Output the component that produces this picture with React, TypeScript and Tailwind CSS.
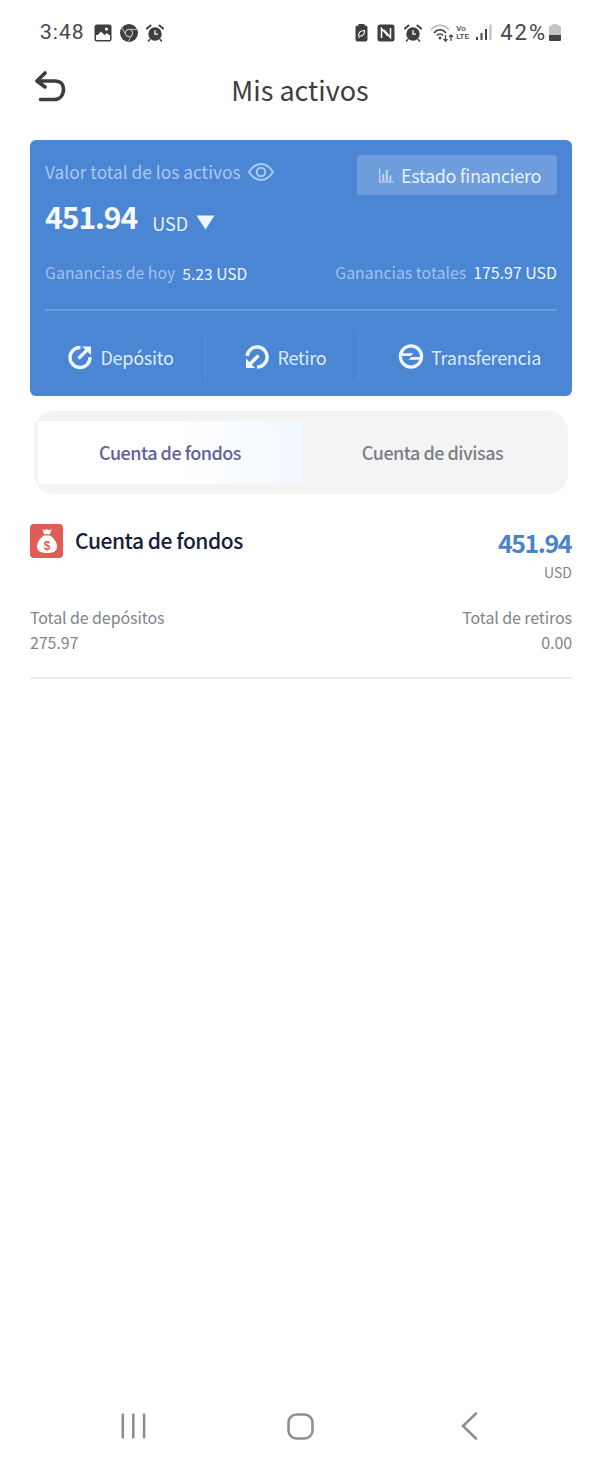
const APP_FONT = "font-['Noto_Sans_CJK_SC','Noto_Sans',sans-serif]";

function PictureIcon() {
  return (
    <svg width="18" height="18" viewBox="0 0 18 18">
      <rect x="0.5" y="0.5" width="17" height="17" rx="2.5" fill="#3f3f3f" />
      <rect x="2" y="11" width="14" height="5" fill="#fff" />
      <path d="M2 13 L7 7.5 L10.5 11 L13 9 L16 12 V14 H2 Z" fill="#fff" />
      <circle cx="12.5" cy="5" r="1.6" fill="#fff" />
    </svg>
  );
}

function ChromeIcon() {
  return (
    <svg width="18" height="18" viewBox="0 0 18 18">
      <circle cx="9" cy="9" r="9" fill="#3f3f3f" />
      <circle cx="9" cy="9" r="3.6" fill="#3f3f3f" stroke="#bbb" strokeWidth="1.2" />
      <path d="M9 5.4 H17 M5.9 10.8 L2 4 M12.1 10.8 L8 17.5" stroke="#bbb" strokeWidth="1" />
    </svg>
  );
}

function AlarmIcon() {
  return (
    <svg width="18" height="18" viewBox="0 0 18 18">
      <circle cx="9" cy="10" r="6.7" fill="#3f3f3f" />
      <path d="M1 4.5 L4.5 1.5 M17 4.5 L13.5 1.5" stroke="#3f3f3f" strokeWidth="2" strokeLinecap="round" />
      <path d="M3.8 15.5 L2.5 17 M14.2 15.5 L15.5 17" stroke="#3f3f3f" strokeWidth="1.6" strokeLinecap="round" />
      <path d="M9 6.2 V10.2 H12" fill="none" stroke="#fff" strokeWidth="1.3" />
    </svg>
  );
}

function BatterySaverIcon() {
  return (
    <svg width="13" height="18" viewBox="0 0 13 18">
      <rect x="3.5" y="0" width="6" height="2" fill="#3f3f3f" />
      <rect x="0.5" y="1.5" width="12" height="16" rx="2" fill="#3f3f3f" />
      <path d="M3.5 12 C3.5 8 6.5 6.5 9.5 6.5 C9.5 10 8 12.5 5 12 L3.5 14" fill="none" stroke="#fff" strokeWidth="1.1" />
    </svg>
  );
}

function NfcIcon() {
  return (
    <svg width="18" height="18" viewBox="0 0 18 18">
      <rect x="0.5" y="0.5" width="17" height="17" rx="2.5" fill="#3f3f3f" />
      <path d="M4.5 14 V4.5 L11 12 M13.5 4 V13.5 L7 6" fill="none" stroke="#fff" strokeWidth="1.5" />
    </svg>
  );
}

function WifiIcon() {
  return (
    <svg width="24" height="18" viewBox="0 0 24 18">
      <path d="M1 6 C6 -0.5 14 -0.5 19 6" fill="none" stroke="#b5b5b5" strokeWidth="1.5" />
      <path d="M4 9 C7.5 4.8 12.5 4.8 16 9" fill="none" stroke="#444" strokeWidth="1.5" />
      <path d="M6.8 11.5 C8.8 9.4 11.2 9.4 13.2 11.5" fill="none" stroke="#444" strokeWidth="1.5" />
      <circle cx="10" cy="14" r="1.4" fill="#444" />
      <path d="M15.5 11 V17 M13.6 15 L15.5 17.2 L17.4 15" fill="none" stroke="#444" strokeWidth="1.2" />
      <path d="M21 17 V11 M19.1 13 L21 10.8 L22.9 13" fill="none" stroke="#444" strokeWidth="1.2" />
    </svg>
  );
}

function SignalIcon() {
  return (
    <svg width="16" height="17" viewBox="0 0 16 17">
      <rect x="0" y="13" width="2" height="3" fill="#444" />
      <rect x="4.5" y="9" width="2" height="7" fill="#444" />
      <rect x="9" y="5" width="2" height="11" fill="#444" />
      <rect x="13.5" y="0.5" width="2" height="15.5" fill="#bbb" />
    </svg>
  );
}

function BatteryIcon() {
  return (
    <svg width="12" height="17" viewBox="0 0 12 17">
      <rect x="3.5" y="0" width="5" height="2" fill="#c4c4c4" />
      <rect x="0" y="1.5" width="12" height="15.5" rx="1.5" fill="#c4c4c4" />
      <path d="M0 11 H12 V15.5 A1.5 1.5 0 0 1 10.5 17 H1.5 A1.5 1.5 0 0 1 0 15.5 Z" fill="#444" />
    </svg>
  );
}

function StatusBar() {
  return (
    <div className="flex h-[64px] items-center justify-between pl-[40px] pr-[39px] pt-[1px] font-['Roboto',sans-serif] text-[#474747]">
      <div className="flex items-center">
        <span className="mr-[9px] text-[21px] leading-none tracking-[1px]">3:48</span>
        <div className="flex items-center gap-[8px]">
          <PictureIcon />
          <ChromeIcon />
          <AlarmIcon />
        </div>
      </div>
      <div className="flex items-center">
        <div className="flex items-center gap-[9px]">
          <BatterySaverIcon />
          <NfcIcon />
          <AlarmIcon />
        </div>
        <div className="ml-[8px]">
          <WifiIcon />
        </div>
        <div className="ml-[2px] flex w-[15px] flex-col text-[8px] font-medium leading-[8px]">
          <span>Vo</span>
          <span>LTE</span>
        </div>
        <div className="ml-[5px]">
          <SignalIcon />
        </div>
        <span className="ml-[8px] text-[22px] leading-none tracking-[2px]">42%</span>
        <div className="ml-[2px]">
          <BatteryIcon />
        </div>
      </div>
    </div>
  );
}

function BackIcon() {
  return (
    <svg width="32" height="32" viewBox="0 0 32 32" fill="none" stroke="#3d3d3d" strokeWidth="3.6" strokeLinecap="round" strokeLinejoin="round">
      <path d="M11 2 L3 10 L11 16" />
      <path d="M3.5 10 H21 C26.5 10 29.5 13.5 29.5 18 C29.5 24 26 28.5 20 28.5 H6.5" />
    </svg>
  );
}

function EyeIcon() {
  return (
    <svg width="26" height="18" viewBox="0 0 26 18" fill="none" stroke="#a9c9f0" strokeWidth="2">
      <path d="M1 9 C5 2.8 9 1 13 1 C17 1 21 2.8 25 9 C21 15.2 17 17 13 17 C9 17 5 15.2 1 9 Z" />
      <circle cx="13" cy="9" r="4.2" />
    </svg>
  );
}

function ChartIcon() {
  return (
    <svg width="15" height="15" viewBox="0 0 15 15" fill="#bcd5f4">
      <rect x="0" y="0.5" width="1.3" height="14" />
      <rect x="0" y="13.4" width="15" height="1.2" />
      <rect x="3.2" y="6" width="2" height="7" />
      <rect x="6.8" y="2" width="2" height="11" />
      <rect x="10.4" y="7.5" width="2" height="5.5" />
    </svg>
  );
}

function DepositIcon() {
  return (
    <svg width="26" height="26" viewBox="0 0 26 26" fill="none" stroke="#f1f6fd" strokeWidth="3.4">
      <path d="M13.5 3.5 A10 10 0 1 0 23 13" />
      <path d="M11.5 14.5 L21 5" />
      <path d="M15 2.5 H24 V11 Z" fill="#f1f6fd" stroke="none" />
    </svg>
  );
}

function WithdrawIcon() {
  return (
    <svg width="26" height="26" viewBox="0 0 26 26" fill="none" stroke="#f1f6fd" strokeWidth="3.4">
      <path d="M3.2 12 A10 10 0 1 1 13 23" />
      <path d="M14.5 11.5 L5 21" />
      <path d="M2 14.5 V24 H11 Z" fill="#f1f6fd" stroke="none" />
    </svg>
  );
}

function TransferIcon() {
  return (
    <svg width="26" height="25" viewBox="0 0 26 25" fill="#f1f6fd">
      <circle cx="13" cy="12.5" r="10.6" fill="none" stroke="#f1f6fd" strokeWidth="3.2" />
      <path d="M1 9.2 H15.5 L12.5 12 H1 Z" />
      <path d="M25 15.8 H10.5 L13.5 13 H25 Z" />
    </svg>
  );
}

function MoneyBagIcon() {
  return (
    <div className="flex h-[34px] w-[33px] items-center justify-center rounded-[4px] bg-[#e05c56]">
      <svg width="22" height="26" viewBox="0 0 22 26">
        <path d="M6.5 1 L9 2.2 L11 1 L13 2.2 L15.5 1 L14 6.2 H8 Z" fill="#fff" />
        <path d="M8 7.5 H14 C18 10 21 14.5 21 18.5 C21 23 17.5 25 11 25 C4.5 25 1 23 1 18.5 C1 14.5 4 10 8 7.5 Z" fill="#fff" />
        <text x="11" y="21.5" textAnchor="middle" fontSize="12" fontWeight="700" fill="#e05c56" fontFamily="'Liberation Sans',sans-serif">$</text>
      </svg>
    </div>
  );
}

function ActionButton({ icon, label, className }: { icon: React.ReactNode; label: string; className: string }) {
  return (
    <div className={`flex h-[47px] items-center justify-center ${className}`}>
      {icon}
      <span className="text-[18px] leading-none tracking-[-0.27px] text-[#deebfb]">{label}</span>
    </div>
  );
}

function AssetCard() {
  return (
    <div className="ml-[30px] h-[256px] w-[542px] rounded-[6px] bg-[#4a86d3] px-[15px] pt-[15px]">
      <div className="flex items-start justify-between">
        <div className="flex items-center gap-[7px] pt-[1px]">
          <span className="text-[17.35px] leading-[32px] text-[#a9c9f0]">Valor total de los activos</span>
          <EyeIcon />
        </div>
        <div className="flex h-[40px] w-[200px] items-center justify-center gap-[7px] rounded-[3px] bg-[#6d9ddd] pl-[6px]">
          <ChartIcon />
          <span className="text-[18px] leading-none tracking-[-0.35px] text-[#e6f0fc]">Estado financiero</span>
        </div>
      </div>
      <div className="-mt-[3px] flex h-[48px] items-center">
        <span className="text-[30px] font-bold leading-none tracking-[-1px] text-[#f6f9fe]">451.94</span>
        <span className="ml-[15px] mt-[13px] text-[18px] leading-none text-[#e6f0fc]">USD</span>
        <svg className="ml-[8px] mt-[13px]" width="19" height="15" viewBox="0 0 19 15">
          <path d="M0.5 0.5 H18.5 L9.5 14.5 Z" fill="#f1f6fd" />
        </svg>
      </div>
      <div className="mt-[22px] flex items-center justify-between leading-[22px]">
        <div className="flex gap-[7px]">
          <span className="text-[15.9px] text-[#a0c2ed]">Ganancias de hoy</span>
          <span className="text-[15.6px] text-[#f1f6fd]">5.23 USD</span>
        </div>
        <div className="flex gap-[7px]">
          <span className="text-[15.9px] text-[#a0c2ed]">Ganancias totales</span>
          <span className="text-[15.9px] text-[#f1f6fd]">175.97 USD</span>
        </div>
      </div>
      <div className="mt-[25px] h-[2px] bg-[#6d9ddd]" />
      <div className="mt-[22px] flex items-center">
        <ActionButton icon={<DepositIcon />} label="Depósito" className="w-[161px] gap-[7px] border-r border-[#6092d9] pr-[9px]" />
        <ActionButton icon={<WithdrawIcon />} label="Retiro" className="w-[153px] gap-[8px] border-r border-[#6092d9] pl-[6px]" />
        <ActionButton icon={<TransferIcon />} label="Transferencia" className="flex-1 gap-[7px] pl-[23px]" />
      </div>
    </div>
  );
}

function Tabs() {
  return (
    <div className="ml-[34px] mt-[15px] flex h-[83px] w-[534px] items-center rounded-[20px] bg-[#f4f4f5] pl-[4px]">
      <div className="flex h-[63px] w-[264px] items-center justify-center bg-gradient-to-r from-white from-50% to-[#f3f8fe] text-[18px] font-medium tracking-[-0.5px] text-[#635f9d]">
        Cuenta de fondos
      </div>
      <div className="flex flex-1 items-center justify-center pr-[5px] text-[18px] font-medium tracking-[-0.5px] text-[#7b8087]">
        Cuenta de divisas
      </div>
    </div>
  );
}

function FundsSection() {
  return (
    <div className="ml-[30px] mt-[30px] w-[542px] border-b-2 border-[#ececee] pb-[22px]">
      <div className="flex items-start justify-between">
        <div className="flex items-center gap-[12px]">
          <MoneyBagIcon />
          <span className="-mt-[2px] text-[21px] font-medium leading-[34px] tracking-[-0.45px] text-[#16203a]">Cuenta de fondos</span>
        </div>
        <div className="flex flex-col items-end">
          <span className="mr-[1px] text-[25px] font-bold leading-[36px] tracking-[-1.5px] text-[#4a83c7]">451.94</span>
          <span className="mt-[3px] text-[14px] leading-[18px] text-[#7f858c]">USD</span>
        </div>
      </div>
      <div className="mt-[24px] flex justify-between text-[16px] leading-[25px] tracking-[-0.1px] text-[#7f858c]">
        <div className="flex flex-col">
          <span>Total de depósitos</span>
          <span>275.97</span>
        </div>
        <div className="flex flex-col items-end">
          <span>Total de retiros</span>
          <span>0.00</span>
        </div>
      </div>
    </div>
  );
}

function NavBar() {
  return (
    <div className="absolute bottom-[27px] left-0 right-0 flex h-[28px] items-center justify-between pl-[121px] pr-[122px]">
      <svg width="25" height="26" viewBox="0 0 25 26" fill="#8f8f8f">
        <rect x="0.5" y="0.5" width="2.6" height="25" rx="1" />
        <rect x="11" y="0.5" width="2.6" height="25" rx="1" />
        <rect x="21.8" y="0.5" width="2.6" height="25" rx="1" />
      </svg>
      <svg className="-ml-[6px]" width="27" height="27" viewBox="0 0 27 27" fill="none" stroke="#8f8f8f" strokeWidth="2.6">
        <rect x="1.5" y="1.5" width="24" height="24" rx="8" />
      </svg>
      <svg width="17" height="28" viewBox="0 0 17 28" fill="none" stroke="#8f8f8f" strokeWidth="2.6" strokeLinecap="round">
        <path d="M15 1.5 L2 14 L15 26.5" />
      </svg>
    </div>
  );
}

export default function App() {
  return (
    <div className={`relative h-[1467px] w-[600px] overflow-hidden bg-white ${APP_FONT}`}>
      <StatusBar />
      <div className="relative flex h-[76px] items-center justify-center pb-[26px]">
        <div className="absolute left-[34px] top-[7px]">
          <BackIcon />
        </div>
        <h1 className="text-[27px] font-normal leading-none text-[#3d3d3d]">Mis activos</h1>
      </div>
      <AssetCard />
      <Tabs />
      <FundsSection />
      <NavBar />
    </div>
  );
}
